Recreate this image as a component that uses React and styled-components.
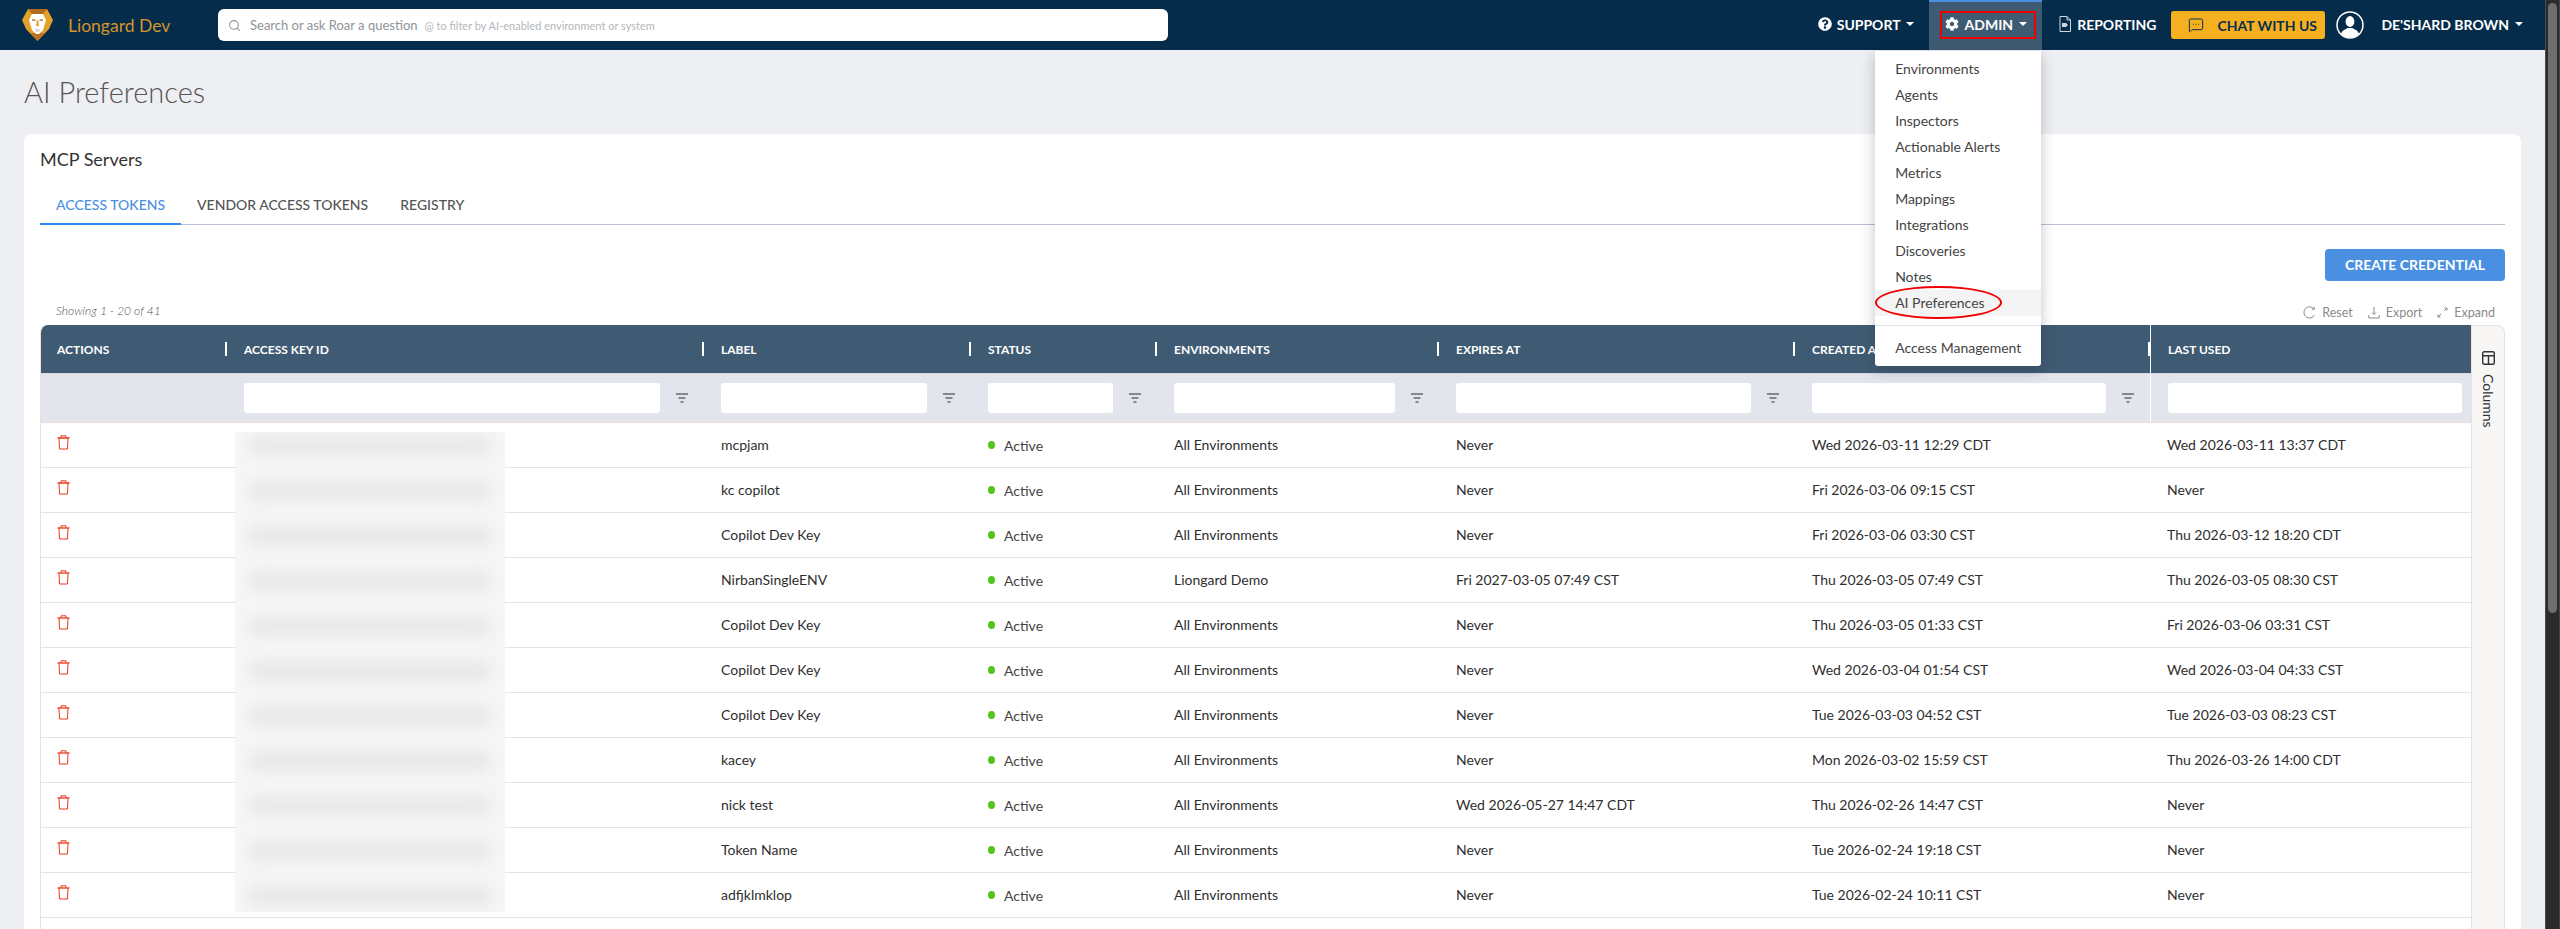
import styled, { createGlobalStyle } from "styled-components";
import { Search, MessageSquareMore } from "lucide-react";
import { FaCog, FaQuestionCircle } from "react-icons/fa";

const GlobalStyle = createGlobalStyle`
  html, body {
    margin: 0;
    height: 100%;
    overflow: hidden;
    background: #eeeff2;
    font-family: Lato, "Liberation Sans", sans-serif;
    color: #2e2e2e;
  }
  * {
    box-sizing: border-box;
  }
`;

const COLUMNS = "186px 477px 267px 186px 282px 356px 355px 1fr";

const Shell = styled.div`
  display: flex;
  height: 929px;
  overflow: hidden;
`;

const Main = styled.div`
  flex: 1;
  min-width: 0;
  display: flex;
  flex-direction: column;
`;

const ScrollTrack = styled.div`
  width: 15px;
  background: #2b2b2b;
  border-left: 1px solid #4a4a4a;
  border-right: 1px solid #444;
  padding: 3px 2px 0;
`;

const ScrollThumb = styled.div`
  height: 610px;
  background: #6e6e6e;
  border-radius: 5px;
`;

const Nav = styled.header`
  height: 50px;
  flex: none;
  display: flex;
  align-items: stretch;
  padding: 0 7px 0 22px;
  background: #052c4a;
  color: #fff;
`;

const Brand = styled.div`
  display: flex;
  align-items: center;
  gap: 15px;
  width: 196px;
  color: #d6942c;
  font-size: 17.5px;
`;

const SearchBox = styled.div`
  align-self: center;
  width: 950px;
  height: 32px;
  display: flex;
  align-items: center;
  padding-left: 10px;
  background: #fff;
  border-radius: 6px;
  color: #8f9499;
  font-size: 13px;
  svg {
    margin-right: 9px;
  }
`;

const SearchHint = styled.span`
  margin-left: 7px;
  font-size: 11px;
  color: #b4b7bb;
`;

const NavRight = styled.div`
  margin-left: auto;
  display: flex;
  align-items: stretch;
`;

const NavItem = styled.div`
  position: relative;
  display: flex;
  align-items: center;
  gap: ${(p) => p.$gap || "6px"};
  padding: ${(p) => p.$padding || "0 15px 2px"};
  font-size: 14px;
  font-weight: 700;
  white-space: nowrap;
  background: ${(p) => (p.$active ? "#3f5b73" : "transparent")};
  border-top: ${(p) => (p.$active ? "2px solid #4a90e2" : "none")};
`;

const Caret = styled.span`
  width: 0;
  height: 0;
  border-left: 4px solid transparent;
  border-right: 4px solid transparent;
  border-top: 4px solid #fff;
`;

const RedBox = styled.div`
  position: absolute;
  left: 11px;
  right: 6px;
  top: 9px;
  height: 28px;
  border: 2px solid #f00000;
`;

const ChatButton = styled.div`
  align-self: center;
  width: 154px;
  height: 28px;
  display: flex;
  align-items: center;
  gap: 13px;
  padding-left: 17px;
  background: #f4b01f;
  border-radius: 3px;
  color: #0b2e4f;
  font-size: 14px;
  font-weight: 700;
  white-space: nowrap;
`;

const Avatar = styled.svg`
  align-self: center;
  margin-left: 11px;
  margin-right: 2px;
`;

const Menu = styled.div`
  position: absolute;
  top: 49px;
  right: 1px;
  width: 166px;
  padding: 5px 0;
  background: #fff;
  border-radius: 0 0 3px 3px;
  box-shadow: 0 4px 14px rgba(30, 40, 60, 0.28);
  z-index: 5;
  color: #444;
  font-weight: 400;
`;

const MenuItem = styled.div`
  position: relative;
  height: 26px;
  display: flex;
  align-items: center;
  padding: 0 0 2px 20px;
  font-size: 14px;
  background: ${(p) => (p.$selected ? "#f4f4f4" : "transparent")};
`;

const MenuDivider = styled.div`
  height: 1px;
  margin: 9px 0;
  background: #e2e2e2;
`;

const RedEllipse = styled.div`
  position: absolute;
  left: 0;
  top: -4px;
  width: 127px;
  height: 33px;
  border: 2px solid #f00000;
  border-radius: 50%;
`;

const PageTitle = styled.h1`
  margin: 0;
  padding: 23px 24px 0;
  height: 84px;
  font-size: 29px;
  line-height: 38px;
  font-weight: 300;
  color: #555;
`;

const Card = styled.section`
  flex: 1;
  min-height: 0;
  margin: 0 24px;
  padding: 14px 16px 0;
  background: #fff;
  border-radius: 8px 8px 0 0;
  display: flex;
  flex-direction: column;
`;

const CardTitle = styled.h2`
  margin: 0;
  height: 24px;
  font-size: 18px;
  line-height: 22px;
  font-weight: 400;
  color: #333;
`;

const TabBar = styled.div`
  display: flex;
  height: 53px;
  padding-top: 20px;
  border-bottom: 1px solid #b9c0d0;
`;

const Tab = styled.div`
  height: 33px;
  padding: 4px 16px 0;
  font-size: 14px;
  font-weight: 500;
  color: ${(p) => (p.$active ? "#4a90e2" : "#555")};
  border-bottom: 2px solid ${(p) => (p.$active ? "#2d8cf0" : "transparent")};
`;

const ActionRow = styled.div`
  display: flex;
  justify-content: flex-end;
  padding-top: 24px;
`;

const CreateButton = styled.div`
  width: 180px;
  height: 32px;
  display: flex;
  align-items: center;
  justify-content: center;
  padding-bottom: 2px;
  background: #4a90e2;
  border-radius: 4px;
  color: #fff;
  font-size: 14px;
  font-weight: 700;
`;

const MetaRow = styled.div`
  height: 44px;
  display: flex;
  align-items: flex-end;
  justify-content: space-between;
  padding: 0 10px 5px 16px;
`;

const Showing = styled.div`
  margin-bottom: 2px;
  font-size: 12px;
  font-style: italic;
  font-weight: 300;
  color: #555;
`;

const Tools = styled.div`
  display: flex;
  gap: 15px;
`;

const Tool = styled.div`
  display: flex;
  align-items: center;
  gap: 6px;
  font-size: 12.5px;
  color: #8a8a8a;
`;

const Grid = styled.div`
  flex: 1;
  min-height: 0;
  display: flex;
  align-items: stretch;
`;

const Table = styled.div`
  flex: 1;
  min-width: 0;
  border-left: 1px solid #e6e2de;
  border-radius: 8px 0 0 0;
  overflow: hidden;
`;

const HeadRow = styled.div`
  display: grid;
  grid-template-columns: ${COLUMNS};
  height: 49px;
  background: #3f5b73;
  color: #fff;
  border-bottom: 1px solid #d5d9e2;
`;

const HeadCell = styled.div`
  display: flex;
  align-items: center;
  justify-content: space-between;
  padding-left: ${(p) => (p.$first ? "16px" : "17px")};
  font-size: 12px;
  font-weight: 700;
  border-left: ${(p) => (p.$pinned ? "1px solid #fff" : "none")};
`;

const Handle = styled.span`
  width: 2px;
  height: 14px;
  background: #fff;
`;

const FilterRow = styled.div`
  display: grid;
  grid-template-columns: ${COLUMNS};
  height: 49px;
  background: #e2e5ec;
  border-bottom: 1px solid #eadfdf;
`;

const FilterCell = styled.div`
  display: flex;
  align-items: center;
  padding-left: 17px;
  border-left: ${(p) => (p.$pinned ? "1px solid #fff" : "none")};
  padding-right: ${(p) => (p.$pinned ? "9px" : "0")};
`;

const FilterInput = styled.div`
  flex: 1;
  height: 30px;
  background: #fff;
  border-radius: 3px;
`;

const FilterIcon = styled.svg`
  flex: none;
  margin: 0 16px;
`;

const Body = styled.div`
  position: relative;
`;

const Row = styled.div`
  display: grid;
  grid-template-columns: ${COLUMNS};
  height: 45px;
  padding-bottom: 2px;
  align-items: center;
  border-bottom: 1px solid #e6e2de;
  font-size: 14px;
  color: #2e2e2e;
`;

const Cell = styled.div`
  padding-left: 17px;
  white-space: nowrap;
`;

const ActionCell = styled(Cell)`
  padding-left: 16px;
  padding-bottom: 3px;
  line-height: 0;
`;

const StatusCell = styled(Cell)`
  display: flex;
  align-items: center;
  gap: 9px;
  padding-top: 2px;
  color: #444;
`;

const Dot = styled.span`
  width: 7px;
  height: 8px;
  border-radius: 50%;
  background: #52c41a;
`;

const BlurBlock = styled.div`
  position: absolute;
  left: 194px;
  top: 9px;
  width: 270px;
  height: 480px;
  padding-top: 6px;
  background: #f7f7f7;
  overflow: hidden;
  display: flex;
  flex-direction: column;
  gap: 29px;
`;

const BlurStreak = styled.div`
  flex: none;
  height: 16px;
  margin: 0 14px;
  background: #e2e2e2;
  filter: blur(9px);
`;

const ColumnsTab = styled.div`
  flex: none;
  width: 34px;
  display: flex;
  flex-direction: column;
  align-items: center;
  padding-top: 25px;
  gap: 9px;
  background: #f8f7f5;
  border: 1px solid #e6e2de;
  border-bottom: none;
  border-radius: 0 8px 0 0;
  font-size: 14px;
  color: #333;
`;

const ColumnsLabel = styled.span`
  writing-mode: vertical-rl;
`;

const rows = [
  ["mcpjam", "All Environments", "Never", "Wed 2026-03-11 12:29 CDT", "Wed 2026-03-11 13:37 CDT"],
  ["kc copilot", "All Environments", "Never", "Fri 2026-03-06 09:15 CST", "Never"],
  ["Copilot Dev Key", "All Environments", "Never", "Fri 2026-03-06 03:30 CST", "Thu 2026-03-12 18:20 CDT"],
  ["NirbanSingleENV", "Liongard Demo", "Fri 2027-03-05 07:49 CST", "Thu 2026-03-05 07:49 CST", "Thu 2026-03-05 08:30 CST"],
  ["Copilot Dev Key", "All Environments", "Never", "Thu 2026-03-05 01:33 CST", "Fri 2026-03-06 03:31 CST"],
  ["Copilot Dev Key", "All Environments", "Never", "Wed 2026-03-04 01:54 CST", "Wed 2026-03-04 04:33 CST"],
  ["Copilot Dev Key", "All Environments", "Never", "Tue 2026-03-03 04:52 CST", "Tue 2026-03-03 08:23 CST"],
  ["kacey", "All Environments", "Never", "Mon 2026-03-02 15:59 CST", "Thu 2026-03-26 14:00 CDT"],
  ["nick test", "All Environments", "Wed 2026-05-27 14:47 CDT", "Thu 2026-02-26 14:47 CST", "Never"],
  ["Token Name", "All Environments", "Never", "Tue 2026-02-24 19:18 CST", "Never"],
  ["adfjklmklop", "All Environments", "Never", "Tue 2026-02-24 10:11 CST", "Never"],
];

const headers = ["ACTIONS", "ACCESS KEY ID", "LABEL", "STATUS", "ENVIRONMENTS", "EXPIRES AT", "CREATED AT", "LAST USED"];

const menuItems = ["Environments", "Agents", "Inspectors", "Actionable Alerts", "Metrics", "Mappings", "Integrations", "Discoveries", "Notes"];

const LionLogo = () => (
  <svg width="31" height="32" viewBox="0 0 31 32">
    <polygon points="6,0 25,0 31,11 27,20 15.5,32 4,20 0,11" fill="#e3a02b" />
    <polygon points="6,0 25,0 21,5 10,5" fill="#b06c1f" />
    <polygon points="4,20 15.5,32 27,20 22,24 9,24" fill="#b9762a" />
    <polygon points="10,5 21,5 24,11 21,21 17,25 14,25 10,21 7,11" fill="#fff" />
    <polygon points="15,11 16,11 17,17 14,17" fill="#e3a02b" />
    <polygon points="10,10 14,11 13,12 10,11.5" fill="#b06c1f" />
    <polygon points="21,10 17,11 18,12 21,11.5" fill="#b06c1f" />
    <polygon points="13,20 18,20 17,23 14,23" fill="#d8d8d8" />
  </svg>
);

const ReportIcon = () => (
  <svg width="12" height="16" viewBox="0 0 12 16" fill="none" stroke="#cfd6dc" strokeWidth="1">
    <path d="M1 .5h7l3.5 3.5v11.5H1z" />
    <path d="M8 .5V4h3.5" />
    <path d="M3 7h4l2 2-2 2H3z" fill="#cfd6dc" stroke="none" />
  </svg>
);

const AvatarIcon = () => (
  <Avatar width="28" height="28" viewBox="0 0 28 28">
    <circle cx="14" cy="14" r="13" fill="none" stroke="#fff" strokeWidth="1.5" />
    <ellipse cx="14" cy="10.5" rx="4.4" ry="5.4" fill="#fff" />
    <path d="M5 23c1-4 5-4.500 6.500-6h5c1.500 1.500 5.500 2 6.500 6-2.500 2.500-5.500 3.600-9 3.600S7.500 25.500 5 23z" fill="#fff" />
  </Avatar>
);

const ResetIcon = () => (
  <svg width="13" height="13" viewBox="0 0 13 13" fill="none" stroke="#8a8a8a" strokeWidth="1">
    <path d="M10.800 2.800A5.600 5.600 0 1 0 11.500 9" />
    <path d="M11.300 .8v2.500H8.800" />
  </svg>
);

const ExportIcon = () => (
  <svg width="12" height="13" viewBox="0 0 12 13" fill="none" stroke="#8a8a8a" strokeWidth="1">
    <path d="M6 1v7M4 6.500 6 8.500l2-2M.8 9v3h10.400V9" />
  </svg>
);

const ExpandIcon = () => (
  <svg width="11" height="11" viewBox="0 0 11 11" fill="none" stroke="#8a8a8a" strokeWidth="1">
    <path d="M4 7 1 10M7 4l3-3M7.500 1H10v2.500M1 7.500V10h2.500" />
  </svg>
);

const FilterGlyph = () => (
  <FilterIcon width="12" height="10" viewBox="0 0 12 10">
    <rect x="0" y="0" width="12" height="2" fill="#85888c" />
    <rect x="2.500" y="4" width="7" height="2" fill="#85888c" />
    <rect x="4.500" y="8" width="3" height="2" fill="#85888c" />
  </FilterIcon>
);

const TrashIcon = () => (
  <svg width="13" height="15" viewBox="0 0 13 15" fill="none" stroke="#e8391d" strokeWidth="1">
    <path d="M.5 3h12" strokeWidth="1.300" />
    <path d="M4 3V.8h5V3" />
    <path d="M2 3l.5 11h8L11 3" />
  </svg>
);

const ColumnsIcon = () => (
  <svg width="13" height="14" viewBox="0 0 13 14" fill="none" stroke="#333" strokeWidth="1.400">
    <rect x=".7" y=".7" width="11.600" height="12.600" rx="1.500" />
    <path d="M.7 4.700h11.600M6.500 4.700v8.600" />
  </svg>
);

export default function App() {
  return (
    <>
      <GlobalStyle />
      <Shell>
        <Main>
          <Nav>
            <Brand>
              <LionLogo />
              Liongard Dev
            </Brand>
            <SearchBox>
              <Search size={13} color="#8f9499" />
              Search or ask Roar a question
              <SearchHint>@ to filter by AI-enabled environment or system</SearchHint>
            </SearchBox>
            <NavRight>
              <NavItem $gap="5px">
                <FaQuestionCircle size={14} />
                SUPPORT
                <Caret />
              </NavItem>
              <NavItem $active $padding="0 15px 4px 16px">
                <FaCog size={14} />
                ADMIN
                <Caret />
                <RedBox />
                <Menu>
                  {menuItems.map((item) => (
                    <MenuItem key={item}>{item}</MenuItem>
                  ))}
                  <MenuItem $selected>
                    AI Preferences
                    <RedEllipse />
                  </MenuItem>
                  <MenuDivider />
                  <MenuItem>Access Management</MenuItem>
                </Menu>
              </NavItem>
              <NavItem $padding="0 15px 2px 17px">
                <ReportIcon />
                REPORTING
              </NavItem>
              <ChatButton>
                <MessageSquareMore size={16} strokeWidth={1.5} />
                CHAT WITH US
              </ChatButton>
              <AvatarIcon />
              <NavItem>
                DE'SHARD BROWN
                <Caret />
              </NavItem>
            </NavRight>
          </Nav>
          <PageTitle>AI Preferences</PageTitle>
          <Card>
            <CardTitle>MCP Servers</CardTitle>
            <TabBar>
              <Tab $active>ACCESS TOKENS</Tab>
              <Tab>VENDOR ACCESS TOKENS</Tab>
              <Tab>REGISTRY</Tab>
            </TabBar>
            <ActionRow>
              <CreateButton>CREATE CREDENTIAL</CreateButton>
            </ActionRow>
            <MetaRow>
              <Showing>Showing 1 - 20 of 41</Showing>
              <Tools>
                <Tool>
                  <ResetIcon />
                  Reset
                </Tool>
                <Tool>
                  <ExportIcon />
                  Export
                </Tool>
                <Tool>
                  <ExpandIcon />
                  Expand
                </Tool>
              </Tools>
            </MetaRow>
            <Grid>
              <Table>
                <HeadRow>
                  {headers.map((h, i) => (
                    <HeadCell key={h} $first={i === 0} $pinned={i === 7}>
                      {h}
                      {i < 7 && <Handle />}
                    </HeadCell>
                  ))}
                </HeadRow>
                <FilterRow>
                  <div />
                  {headers.slice(1).map((h, i) => (
                    <FilterCell key={h} $pinned={i === 6}>
                      <FilterInput />
                      {i < 6 && <FilterGlyph />}
                    </FilterCell>
                  ))}
                </FilterRow>
                <Body>
                  {rows.map((row, i) => (
                    <Row key={i}>
                      <ActionCell>
                        <TrashIcon />
                      </ActionCell>
                      <Cell />
                      <Cell>{row[0]}</Cell>
                      <StatusCell>
                        <Dot />
                        Active
                      </StatusCell>
                      <Cell>{row[1]}</Cell>
                      <Cell>{row[2]}</Cell>
                      <Cell>{row[3]}</Cell>
                      <Cell>{row[4]}</Cell>
                    </Row>
                  ))}
                  <Row />
                  <BlurBlock>
                    {rows.map((row, i) => (
                      <BlurStreak key={i} />
                    ))}
                  </BlurBlock>
                </Body>
              </Table>
              <ColumnsTab>
                <ColumnsIcon />
                <ColumnsLabel>Columns</ColumnsLabel>
              </ColumnsTab>
            </Grid>
          </Card>
        </Main>
        <ScrollTrack>
          <ScrollThumb />
        </ScrollTrack>
      </Shell>
    </>
  );
}
